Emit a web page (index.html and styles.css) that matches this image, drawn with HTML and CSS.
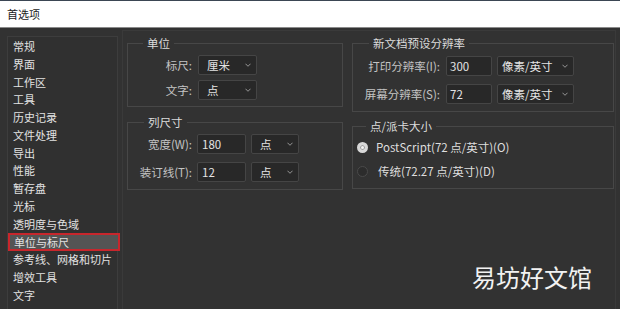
FILE: index.html
```html
<!DOCTYPE html>
<html lang="zh-CN">
<head>
<meta charset="utf-8">
<title>首选项</title>
<link rel="stylesheet" href="styles.css">
</head>
<body>
<div class="titlebar">首选项</div>
<div class="main">
  <ul class="sidebar">
    <li>常规</li>
    <li>界面</li>
    <li>工作区</li>
    <li>工具</li>
    <li>历史记录</li>
    <li>文件处理</li>
    <li>导出</li>
    <li>性能</li>
    <li>暂存盘</li>
    <li>光标</li>
    <li>透明度与色域</li>
    <li class="selected">单位与标尺</li>
    <li>参考线、网格和切片</li>
    <li>增效工具</li>
    <li>文字</li>
    <li>3D</li>
  </ul>
  <div class="panel">
    <div class="col">
      <fieldset class="group g-units">
        <legend>单位</legend>
        <div class="rows rows-units">
          <span class="label">标尺:</span>
          <div class="select"><span>厘米</span><svg class="chev" viewBox="0 0 7 4"><polyline points="0.5,0.5 3.5,3.5 6.5,0.5"/></svg></div>
          <span class="label">文字:</span>
          <div class="select"><span>点</span><svg class="chev" viewBox="0 0 7 4"><polyline points="0.5,0.5 3.5,3.5 6.5,0.5"/></svg></div>
        </div>
      </fieldset>
      <fieldset class="group g-col">
        <legend>列尺寸</legend>
        <div class="rows rows-col">
          <span class="label">宽度(W):</span>
          <div class="input">180</div>
          <div class="select"><span>点</span><svg class="chev" viewBox="0 0 7 4"><polyline points="0.5,0.5 3.5,3.5 6.5,0.5"/></svg></div>
          <span class="label">装订线(T):</span>
          <div class="input">12</div>
          <div class="select"><span>点</span><svg class="chev" viewBox="0 0 7 4"><polyline points="0.5,0.5 3.5,3.5 6.5,0.5"/></svg></div>
        </div>
      </fieldset>
    </div>
    <div class="col">
      <fieldset class="group g-res">
        <legend>新文档预设分辨率</legend>
        <div class="rows rows-res">
          <span class="label">打印分辨率(I):</span>
          <div class="input">300</div>
          <div class="select"><span>像素/英寸</span><svg class="chev" viewBox="0 0 7 4"><polyline points="0.5,0.5 3.5,3.5 6.5,0.5"/></svg></div>
          <span class="label">屏幕分辨率(S):</span>
          <div class="input">72</div>
          <div class="select"><span>像素/英寸</span><svg class="chev" viewBox="0 0 7 4"><polyline points="0.5,0.5 3.5,3.5 6.5,0.5"/></svg></div>
        </div>
      </fieldset>
      <fieldset class="group g-pica">
        <legend>点/派卡大小</legend>
        <div class="radios">
          <div class="radio-row"><span class="radio on"></span><span>PostScript(72 点/英寸)(O)</span></div>
          <div class="radio-row"><span class="radio"></span><span class="trad">传统(72.27 点/英寸)(D)</span></div>
        </div>
      </fieldset>
    </div>
  </div>
</div>
<div class="watermark">易坊好文馆</div>
</body>
</html>
```

FILE: styles.css
```css
* { box-sizing: border-box; }
html, body {
  margin: 0;
  padding: 0;
  width: 620px;
  height: 309px;
  overflow: hidden;
  background: #323232;
  font-family: "Noto Sans CJK SC", "Noto Sans", sans-serif;
  color: #d8d8d8;
}
body { position: relative; }

.titlebar {
  height: 28px;
  background: #ffffff;
  border-top: 1px solid #3b4654;
  border-bottom: 1px solid #8a8a8a;
  color: #1a1a1a;
  font-size: 11px;
  line-height: 26px;
  padding-left: 7px;
}

.main {
  display: flex;
  align-items: flex-start;
  padding: 2px 4px 0 7px;
  height: 281px;
}

.sidebar {
  list-style: none;
  margin: 6px 0 0 0;
  padding: 1px 0 0 0;
  width: 111px;
  height: 290px;
  border: 1px solid #3d3d3d;
  background: #303030;
  font-size: 11px;
  color: #e2e2e2;
}
.sidebar li {
  height: 17.75px;
  line-height: 17.75px;
  padding-left: 5px;
  white-space: nowrap;
}
.sidebar li.selected {
  background: #545454;
  border: 2px solid #c8262c;
  margin: 0 -3px 0 0;
  padding-left: 4px;
  line-height: 14px;
  position: relative;
  left: 0;
}

.panel {
  flex: 1;
  margin-left: 4px;
  height: 290px;
  border: 1px solid #3a3a3a;
  border-bottom: none;
  padding: 4px 1px 0 4px;
  display: grid;
  grid-template-columns: 216px 1fr;
  column-gap: 9px;
  align-items: start;
}
.col {
  display: flex;
  flex-direction: column;
}

.group {
  margin: 0;
  padding: 0;
  border: 1px solid #474747;
  min-width: 0;
}
.group legend {
  font-size: 11.5px;
  line-height: 16px;
  padding: 0 4px;
  color: #dcdcdc;
}
.g-units legend { margin-left: 15px; }
.g-col legend { margin-left: 16px; }
.g-res legend { margin-left: 16px; }
.g-pica legend { margin-left: 13px; }

.g-col { margin-top: 7px; }
.g-pica { margin-top: 6px; }

.rows {
  display: grid;
  align-items: center;
  font-size: 11.5px;
}
.label {
  text-align: right;
  color: #c4c4c4;
  white-space: nowrap;
}
.rows-units {
  grid-template-columns: 64px 59px;
  column-gap: 6px;
  row-gap: 5px;
  grid-auto-rows: 20px;
  padding: 4px 0 6px 0;
}
.rows-col {
  grid-template-columns: 64px 49px 48px;
  column-gap: 5px;
  row-gap: 8px;
  grid-auto-rows: 20px;
  padding: 4px 0 7px 0;
}
.rows-res {
  grid-template-columns: 87px 47px 77px;
  column-gap: 5px;
  row-gap: 8px;
  grid-auto-rows: 20px;
  padding: 5px 0 7px 0;
}
.rows-res .input { margin-left: 1px; }

.select, .input {
  height: 20px;
  background: #282828;
  border: 1px solid #454545;
  border-radius: 2px;
  color: #e4e4e4;
  font-size: 11.5px;
  line-height: 18px;
}
.select {
  display: flex;
  align-items: center;
  justify-content: space-between;
  padding: 0 5px 0 8px;
}
.input { padding-left: 4px; }
.rows-res .input { padding-left: 3px; }
.rows-res .select { padding-left: 4px; }

.chev {
  width: 6px;
  height: 4px;
  fill: none;
  stroke: #a8a8a8;
  stroke-width: 1;
}

.radios {
  display: flex;
  flex-direction: column;
  gap: 8px;
  padding: 5px 0 9px 4px;
  font-size: 11.5px;
  color: #dedede;
}
.radio-row {
  display: flex;
  align-items: center;
  height: 16px;
  gap: 8px;
}
.radio {
  width: 11px;
  height: 11px;
  border-radius: 50%;
  border: 1px solid #4a4a4a;
  background: #2c2c2c;
  flex: none;
}
.radio.on {
  border: 3px solid #d8d8d8;
  background: #f4f4f4;
  box-shadow: inset 0 0 0 1px #9a9a9a;
}
.trad { margin-left: 2px; }

.watermark {
  position: absolute;
  left: 472px;
  top: 262px;
  font-size: 24px;
  line-height: 30px;
  color: #f2f2f2;
  white-space: nowrap;
}
```
